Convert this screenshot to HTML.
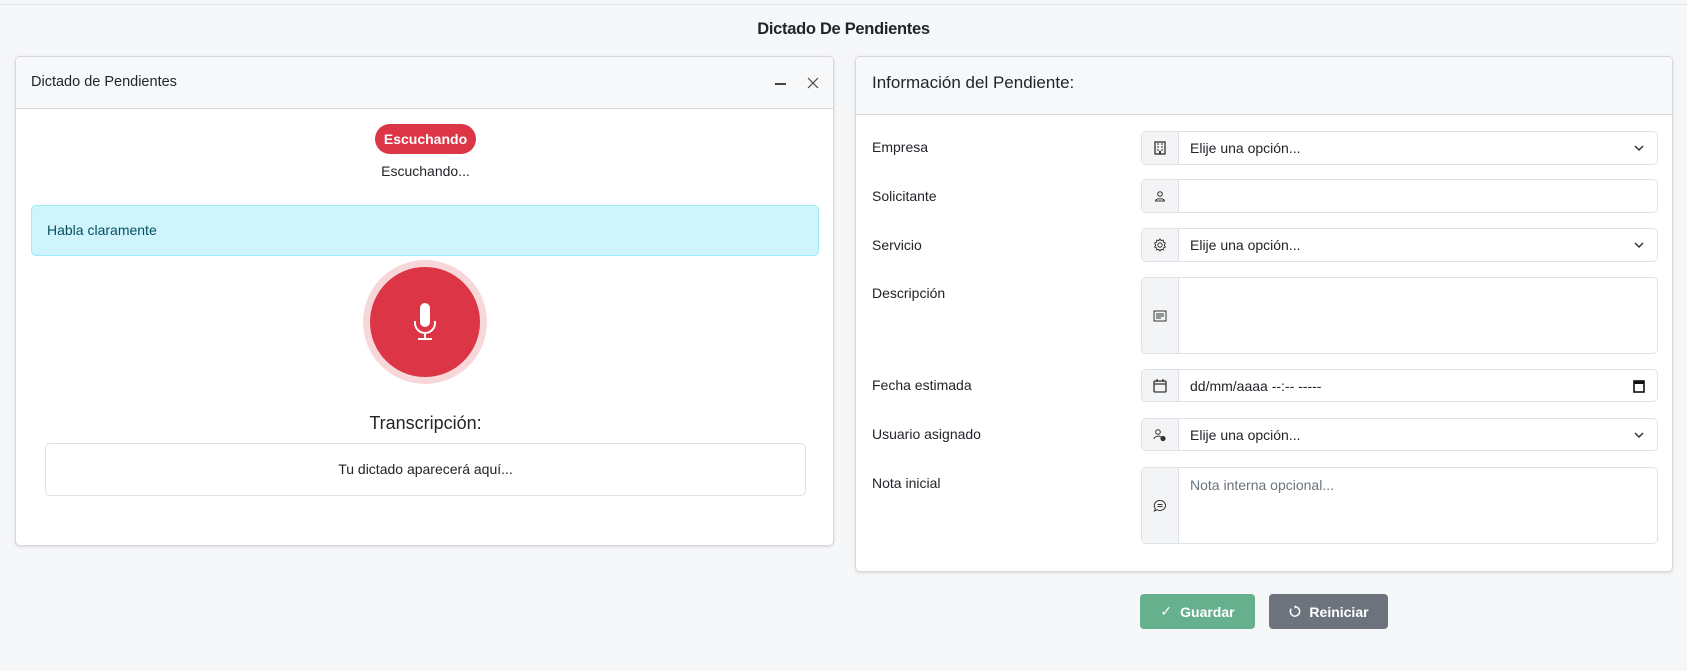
<!DOCTYPE html>
<html><head><meta charset="utf-8"><style>
*{box-sizing:border-box;margin:0;padding:0}
body{width:1687px;height:671px;background:#f6f7f9;font-family:"Liberation Sans",sans-serif;color:#212529;position:relative;overflow:hidden;font-size:14px}
.topline{position:absolute;left:0;top:0;width:1687px;height:5px;border-bottom:1px solid #e3e5e8;background:#f6f7f9}
.title{position:absolute;top:20px;left:0;width:1687px;text-align:center;font-weight:bold;font-size:16.5px;letter-spacing:-0.3px}
.card{position:absolute;background:#fff;border:1px solid #d6d8db;border-radius:5px;box-shadow:0 1px 3px rgba(0,0,0,.12)}
.hdr{position:absolute;left:0;top:0;right:0;background:#f7f8fa;border-bottom:1px solid #d6d8db;border-radius:5px 5px 0 0}
.abs{position:absolute}
.lbl{position:absolute;left:16px;font-size:14px;color:#212529}
.ig{position:absolute;left:285px;width:517px;border:1px solid #dee2e6;border-radius:5px;background:#fff}
.ig .ad{position:absolute;left:0;top:0;bottom:0;width:37px;background:#f3f4f6;border-right:1px solid #dee2e6;border-radius:5px 0 0 5px;display:flex;align-items:center;justify-content:center}
.ig .tx{position:absolute;left:48px;font-size:14px;color:#212529}
.chev{position:absolute;right:13px}
.btn{position:absolute;top:594px;height:35px;border-radius:4px;color:#fff;font-size:14px;font-weight:bold;display:flex;align-items:center;justify-content:center;gap:8px}
</style></head><body>
<div class="topline"></div>
<div class="title">Dictado De Pendientes</div>

<div class="card" style="left:15px;top:56px;width:819px;height:490px">
  <div class="hdr" style="height:52px">
    <div class="abs" style="left:15px;top:17px;font-size:14.5px">Dictado de Pendientes</div>
    <div class="abs" style="left:759px;top:26px;width:11px;height:1.5px;background:#444"></div>
    <svg class="abs" style="left:791px;top:20px" width="12" height="12" viewBox="0 0 12 12"><path d="M1 1L11 11M11 1L1 11" stroke="#444" stroke-width="1.2"/></svg>
  </div>
  <div class="abs" style="left:359px;top:67px;width:101px;height:30px;background:#dc3545;border-radius:15px;color:#fff;font-weight:bold;font-size:14px;text-align:center;line-height:30px">Escuchando</div>
  <div class="abs" style="left:0;width:819px;top:106px;text-align:center;font-size:14px">Escuchando...</div>
  <div class="abs" style="left:15px;top:148px;width:788px;height:51px;background:#cff4fc;border:1px solid #9eeaf9;border-radius:5px;color:#055160;font-size:14px;padding:16px 0 0 15px">Habla claramente</div>
  <div class="abs" style="left:347px;top:203px;width:124px;height:124px;border-radius:50%;background:#f8d7da"></div>
  <div class="abs" style="left:354px;top:210px;width:110px;height:110px;border-radius:50%;background:#dc3545"></div>
  <svg class="abs" style="left:396px;top:246px" width="26" height="40" viewBox="0 0 26 40"><rect x="8" y="0" width="10" height="24" rx="5" fill="#fff"/><path d="M3 18v2a10 10 0 0 0 20 0v-2M13 30v6M6 36h14" stroke="#fff" stroke-width="2" fill="none"/></svg>
  <div class="abs" style="left:0;width:819px;top:356px;text-align:center;font-size:18px">Transcripción:</div>
  <div class="abs" style="left:29px;top:386px;width:761px;height:53px;border:1px solid #dee2e6;border-radius:5px;text-align:center;line-height:51px;font-size:14px">Tu dictado aparecerá aquí...</div>
</div>

<div class="card" style="left:855px;top:56px;width:818px;height:516px">
  <div class="hdr" style="height:58px">
    <div class="abs" style="left:16px;top:16px;font-size:17px">Información del Pendiente:</div>
  </div>
  <div class="lbl" style="top:82px">Empresa</div>
  <div class="ig" style="top:74px;height:34px"><div class="ad"><svg width="12" height="14" viewBox="0 0 12 14"><rect x="1" y="1" width="10" height="12" fill="none" stroke="#333" stroke-width="1.3"/><path d="M3 3h2M7 3h2M3 6h2M7 6h2M3 9h2M7 9h2" stroke="#333"/><rect x="5" y="10" width="2" height="3" fill="#333"/></svg></div><div class="tx" style="top:8px">Elije una opción...</div><svg class="chev" style="top:12px" width="10" height="8" viewBox="0 0 10 8"><path d="M1 2l4 4 4-4" stroke="#333" stroke-width="1.5" fill="none"/></svg></div>

  <div class="lbl" style="top:131px">Solicitante</div>
  <div class="ig" style="top:122px;height:34px"><div class="ad"><svg width="12" height="12" viewBox="0 0 12 12"><circle cx="6" cy="4" r="2.3" fill="none" stroke="#333"/><path d="M1.5 11c0-3 9-3 9 0z" fill="none" stroke="#333"/></svg></div></div>

  <div class="lbl" style="top:180px">Servicio</div>
  <div class="ig" style="top:171px;height:34px"><div class="ad"><svg width="14" height="14" viewBox="0 0 14 14"><circle cx="7" cy="7" r="2.2" fill="none" stroke="#333"/><path d="M7 1l1.2 1.6 2-.5.3 2 1.8 1-1 1.9 1 1.9-1.8 1-.3 2-2-.5L7 13l-1.2-1.6-2 .5-.3-2-1.8-1 1-1.9-1-1.9 1.8-1 .3-2 2 .5z" fill="none" stroke="#333"/></svg></div><div class="tx" style="top:8px">Elije una opción...</div><svg class="chev" style="top:12px" width="10" height="8" viewBox="0 0 10 8"><path d="M1 2l4 4 4-4" stroke="#333" stroke-width="1.5" fill="none"/></svg></div>

  <div class="lbl" style="top:228px">Descripción</div>
  <div class="ig" style="top:220px;height:77px"><div class="ad"><svg width="14" height="12" viewBox="0 0 14 12"><rect x="1" y="1" width="12" height="10" fill="none" stroke="#333"/><path d="M3 4h8M3 6h8M3 8h5" stroke="#333"/></svg></div></div>

  <div class="lbl" style="top:320px">Fecha estimada</div>
  <div class="ig" style="top:312px;height:33px"><div class="ad"><svg width="14" height="14" viewBox="0 0 14 14"><rect x="1" y="2" width="12" height="11" rx="1" fill="none" stroke="#333" stroke-width="1.3"/><path d="M1 5h12M4 0v3M10 0v3" stroke="#333" stroke-width="1.3"/></svg></div><div class="tx" style="top:8px">dd/mm/aaaa --:-- -----</div><svg class="chev" style="top:9px;right:12px" width="12" height="14" viewBox="0 0 12 14"><rect x="1" y="2" width="10" height="11" fill="none" stroke="#111" stroke-width="1.6"/><rect x="1" y="2" width="10" height="3" fill="#111"/></svg></div>

  <div class="lbl" style="top:369px">Usuario asignado</div>
  <div class="ig" style="top:361px;height:33px"><div class="ad"><svg width="14" height="14" viewBox="0 0 14 14"><circle cx="5" cy="4" r="2.3" fill="none" stroke="#333"/><path d="M1 11c0-3 6-3.5 7-2" fill="none" stroke="#333"/><circle cx="10" cy="10.5" r="2.6" fill="#333"/></svg></div><div class="tx" style="top:8px">Elije una opción...</div><svg class="chev" style="top:12px" width="10" height="8" viewBox="0 0 10 8"><path d="M1 2l4 4 4-4" stroke="#333" stroke-width="1.5" fill="none"/></svg></div>

  <div class="lbl" style="top:418px">Nota inicial</div>
  <div class="ig" style="top:410px;height:77px"><div class="ad"><svg width="14" height="14" viewBox="0 0 14 14"><path d="M7 1.5a5.5 5 0 1 1-3 9.2L1.5 12l.8-2.6A5.5 5 0 0 1 7 1.5z" fill="none" stroke="#333"/><path d="M4.5 5.5h5M4.5 7.5h5" stroke="#333"/></svg></div><div class="tx" style="top:9px;color:#6c757d">Nota interna opcional...</div></div>
</div>

<div class="btn" style="left:1140px;width:115px;background:#67b08d"><span style="font-weight:normal">✓</span>Guardar</div>
<div class="btn" style="left:1269px;width:119px;background:#6c737c"><svg width="13" height="13" viewBox="0 0 14 14"><path d="M3.5 4A5 5 0 1 0 7 2" fill="none" stroke="#fff" stroke-width="1.6"/><path d="M7 0v4l2.5-2z" fill="#fff"/></svg>Reiniciar</div>
</body></html>
